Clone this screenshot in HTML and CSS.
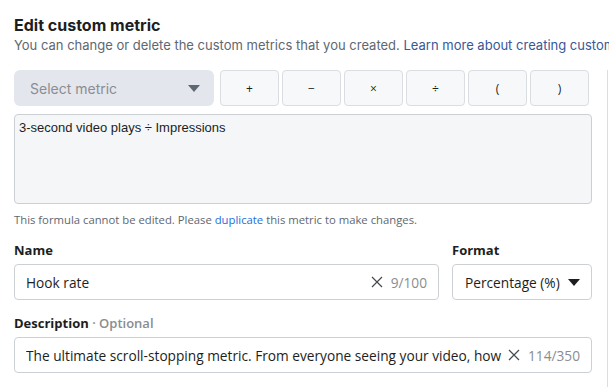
FILE: index.html
```html
<!DOCTYPE html>
<html>
<head>
<meta charset="utf-8">
<link rel="stylesheet" href="styles.css">
</head>
<body>
<div class="page">
  <div class="panel">
    <h1 class="title">Edit custom metric</h1>
    <p class="subtitle">You can change or delete the custom metrics that you created. <a class="link">Learn more about creating custom metrics</a></p>
    <div class="toolbar">
      <div class="metric-select">
        <span>Select metric</span>
        <svg class="caret" width="12" height="7" viewBox="0 0 12 7"><path d="M0 0h12L6 7z" fill="#606770"/></svg>
      </div>
      <div class="ops">
        <div class="op">+</div>
        <div class="op">−</div>
        <div class="op">×</div>
        <div class="op">÷</div>
        <div class="op">(</div>
        <div class="op">)</div>
      </div>
    </div>
    <div class="formula">3-second video plays ÷ Impressions</div>
    <p class="helper">This formula cannot be edited. Please <a class="helper-link">duplicate</a> this metric to make changes.</p>
    <div class="row">
      <div class="field name-field">
        <label class="label">Name</label>
        <div class="input">
          <span class="value">Hook rate</span>
          <svg class="clear" width="12" height="12" viewBox="0 0 12 12"><path d="M1 1l10 10M11 1L1 11" stroke="#444950" stroke-width="1.2"/></svg>
          <span class="count">9/100</span>
        </div>
      </div>
      <div class="field format-field">
        <label class="label">Format</label>
        <div class="input select">
          <span class="value">Percentage (%)</span>
          <svg class="caret" width="12" height="7" viewBox="0 0 12 7"><path d="M0 0h12L6 7z" fill="#1c1e21"/></svg>
        </div>
      </div>
    </div>
    <div class="field desc-field">
      <label class="label">Description <span class="optional">· Optional</span></label>
      <div class="input">
        <span class="value">The ultimate scroll-stopping metric. From everyone seeing your video, how many stopped to watch it for at least 3 seconds.</span>
        <svg class="clear" width="12" height="12" viewBox="0 0 12 12"><path d="M1 1l10 10M11 1L1 11" stroke="#444950" stroke-width="1.2"/></svg>
        <span class="count">114/350</span>
      </div>
    </div>
  </div>
  <div class="divider"></div>
</div>
</body>
</html>
```
FILE: styles.css
```css
* { box-sizing: border-box; }
html, body { margin: 0; padding: 0; background: #fff; }
body { width: 609px; height: 387px; overflow: hidden; font-family: "Open Sans", "Noto Sans", sans-serif; color: #1c1e21; }
.page { display: flex; height: 387px; overflow: hidden; }
.panel { width: 594px; padding: 15px 0 0 14px; flex: none; }
.divider { width: 1px; background: #dadde1; margin-top: 70px; margin-left: 13px; flex: none; }
.title { margin: 0; font-family: Inter, sans-serif; font-size: 16px; font-weight: 700; line-height: 20px; color: #1c1e21; }
.subtitle { margin: 0; font-family: Inter, sans-serif; font-size: 13px; line-height: 20px; color: #606770; white-space: nowrap; width: 595px; overflow: hidden; }
.link { color: #385898; }
.toolbar { display: flex; margin-top: 15px; height: 36px; }
.metric-select { width: 200px; background: #e4e6ee; border-radius: 6px; display: flex; align-items: center; justify-content: space-between; padding: 0 14px 0 16px; font-family: Inter, sans-serif; font-size: 14px; color: #8a8d91; }
.ops { display: flex; gap: 3px; margin-left: 6px; }
.op { width: 59px; height: 36px; border: 1px solid #dadde1; border-radius: 4px; background: #f7f8fa; display: flex; align-items: center; justify-content: center; font-family: "Open Sans", sans-serif; font-size: 12px; color: #1c1e21; }
.formula { margin-top: 8px; width: 578px; height: 90px; background: #f5f6f7; border: 1px solid #ccd0d5; border-radius: 4px; padding: 5px 4px; font-family: "Liberation Sans", Arial, sans-serif; font-size: 13px; line-height: 16px; color: #1c1e21; }
.helper { margin: 8px 0 0; font-size: 11.3px; line-height: 16px; color: #606770; }
.helper-link { color: #216fdb; }
.row { display: flex; gap: 13px; margin-top: 14px; }
.field { display: flex; flex-direction: column; }
.name-field { width: 425px; }
.format-field { width: 140px; }
.label { font-size: 13px; font-weight: 700; line-height: 16px; color: #1c1e21; margin-bottom: 6px; }
.optional { color: #8a8d91; font-weight: 600; }
.input { height: 36px; border: 1px solid #ccd0d5; border-radius: 4px; background: #fff; display: flex; align-items: center; padding: 0 11px; font-size: 13.7px; color: #1c1e21; width: 578px; }
.name-field .input, .format-field .input { width: auto; }
.value { flex: 1; white-space: nowrap; overflow: hidden; }
.clear { margin: 0 8px 0 6px; flex: none; }
.count { color: #8a8d91; font-size: 13.7px; flex: none; }
.select { padding: 0 11px 0 12px; }
.select .caret { flex: none; }
.desc-field { margin-top: 15px; }
```
